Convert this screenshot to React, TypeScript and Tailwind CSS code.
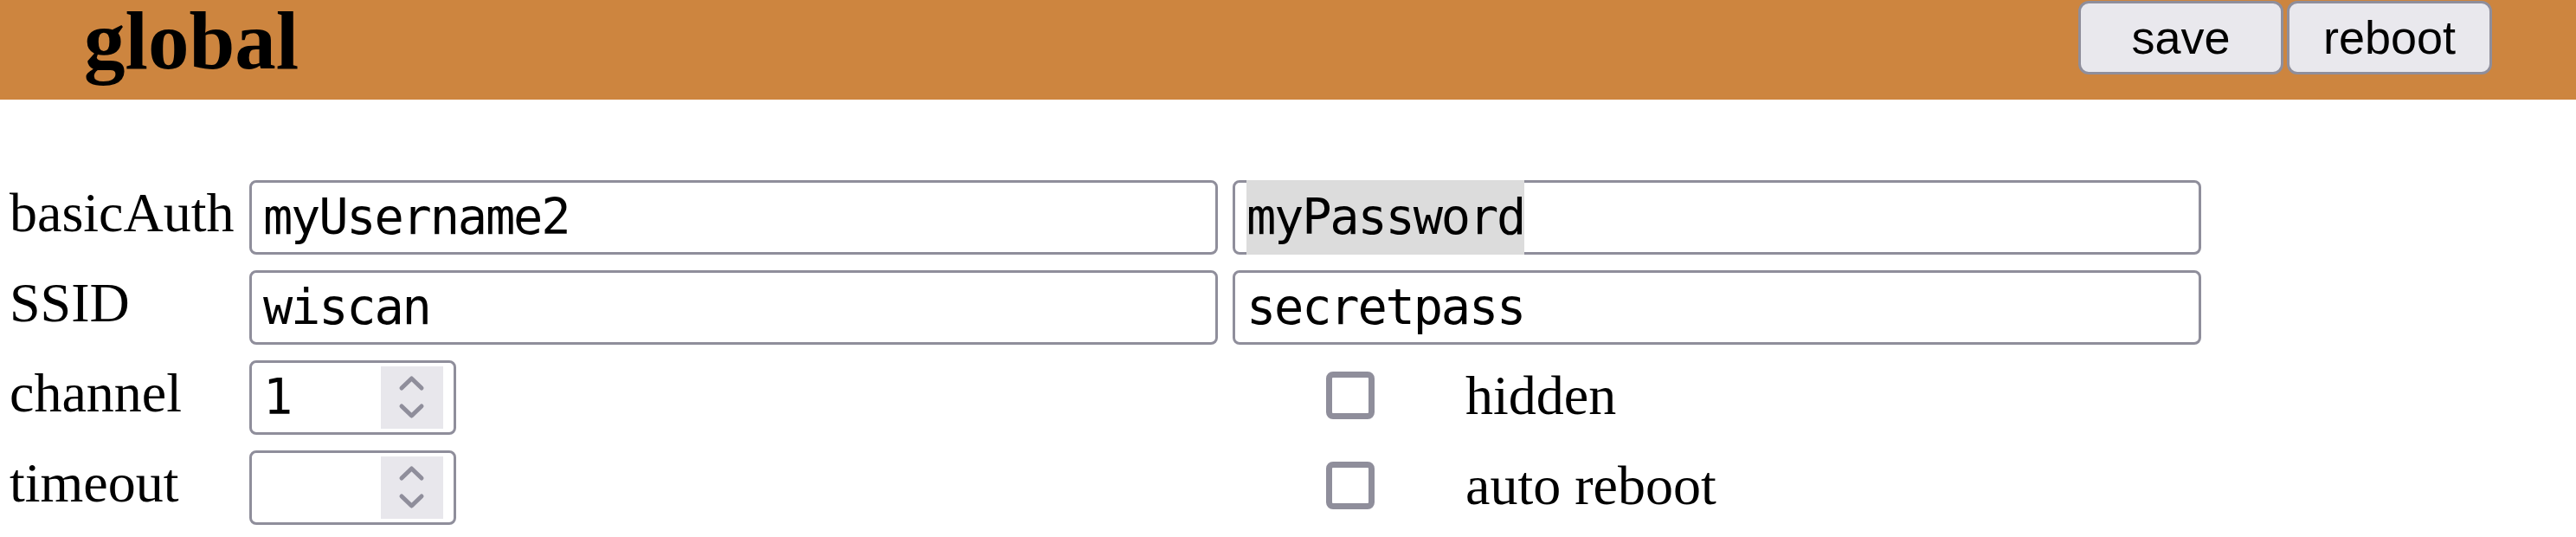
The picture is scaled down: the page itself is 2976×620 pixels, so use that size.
import React from 'react'

const serif = "font-['Liberation_Serif','Times_New_Roman',serif]"
const mono = "font-['DejaVu_Sans_Mono','Liberation_Mono',monospace]"

function TextField({ value, marked }: { value: string; marked?: boolean }) {
  return (
    <div className="h-[86px] border-[3px] border-[#8f8e9b] rounded-[8px] bg-white flex items-center pl-[13px]">
      <span
        className={`${mono} text-[57px] leading-normal tracking-[-2.2px] text-black ${marked ? 'bg-[#dcdcdc]' : ''}`}
      >
        {value}
      </span>
    </div>
  )
}

function NumberField({ value }: { value?: string }) {
  return (
    <div className="w-[239px] h-[86px] border-[3px] border-[#8f8e9b] rounded-[8px] bg-white flex items-center justify-between pl-[13px] pr-[12px]">
      <span className={`${mono} text-[57px] leading-normal tracking-[-2.2px] text-black`}>{value}</span>
      <div className="w-[72px] h-[72px] bg-[#e8e7ec]">
        <svg width="72" height="72" viewBox="0 0 72 72" fill="none" stroke="#8f8e9b" strokeWidth="5" strokeLinecap="round" strokeLinejoin="round">
          <polyline points="24,25 35.5,14 47,25" />
          <polyline points="24,46 35.5,57 47,46" />
        </svg>
      </div>
    </div>
  )
}

function Check({ label }: { label: string }) {
  return (
    <div className="flex items-center pl-[108px] pb-[5px]">
      <span className="w-[56px] h-[55px] border-[7px] border-[#8f8e9b] rounded-[8px] bg-white" />
      <span className={`${serif} ml-[105px] text-[64px] leading-normal text-black`}>{label}</span>
    </div>
  )
}

function Label({ children }: { children: React.ReactNode }) {
  return (
    <div className={`${serif} flex items-center pl-[11px] pb-[11px] text-[64px] leading-normal text-black whitespace-nowrap`}>
      {children}
    </div>
  )
}

export default function App() {
  return (
    <div className="w-[2976px] h-[620px] bg-white overflow-hidden">
      {/* Header */}
      <header className="h-[115px] bg-[#cd853f] flex justify-between items-start pl-[97px] pr-[97px]">
        <h1 className={`${serif} text-[95px] font-bold leading-none pb-[12px] text-black`}>global</h1>
        <div className="flex gap-[4px] mt-[1px]">
          {['save', 'reboot'].map((b) => (
            <button
              key={b}
              className="w-[237px] h-[85px] bg-[#e9e8ed] border-[3px] border-[#8f8e9b] rounded-[12px] flex items-center justify-center font-['Liberation_Sans',Arial,sans-serif] text-[54px] text-black"
            >
              {b}
            </button>
          ))}
        </div>
      </header>

      {/* Settings */}
      <div className="pt-[93px] grid grid-cols-[271px_1119px_1119px] auto-rows-[86px] gap-x-[17px] gap-y-[18px]">
        <Label>basicAuth</Label>
        <TextField value="myUsername2" />
        <TextField value="myPassword" marked />

        <Label>SSID</Label>
        <TextField value="wiscan" />
        <TextField value="secretpass" />

        <Label>channel</Label>
        <NumberField value="1" />
        <Check label="hidden" />

        <Label>timeout</Label>
        <NumberField />
        <Check label="auto reboot" />
      </div>
    </div>
  )
}
